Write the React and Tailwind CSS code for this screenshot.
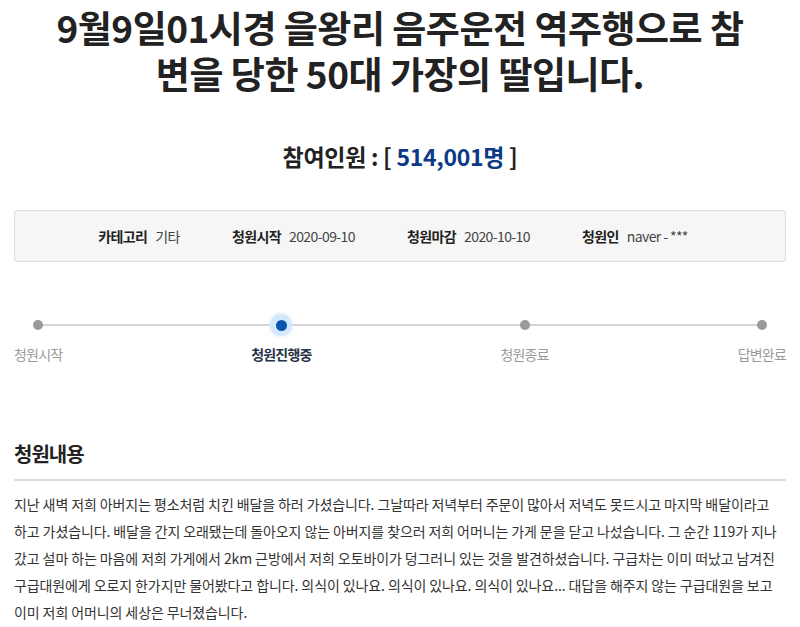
import React from 'react';

const font = { fontFamily: '"Noto Sans CJK KR", "Noto Sans", sans-serif' };

const steps = [
  { label: '청원시작', active: false },
  { label: '청원진행중', active: true },
  { label: '청원종료', active: false },
  { label: '답변완료', active: false },
];

const bodyLines = [
  '지난 새벽 저희 아버지는 평소처럼 치킨 배달을 하러 가셨습니다. 그날따라 저녁부터 주문이 많아서 저녁도 못드시고 마지막 배달이라고',
  '하고 가셨습니다. 배달을 간지 오래됐는데 돌아오지 않는 아버지를 찾으러 저희 어머니는 가게 문을 닫고 나섰습니다. 그 순간 119가 지나',
  '갔고 설마 하는 마음에 저희 가게에서 2km 근방에서 저희 오토바이가 덩그러니 있는 것을 발견하셨습니다. 구급차는 이미 떠났고 남겨진',
  '구급대원에게 오로지 한가지만 물어봤다고 합니다. 의식이 있나요. 의식이 있나요. 의식이 있나요... 대답을 해주지 않는 구급대원을 보고',
  '이미 저희 어머니의 세상은 무너졌습니다.',
];

function InfoItem({ label, value }) {
  return (
    <div className="flex items-center gap-2">
      <span className="font-bold text-[#222]">{label}</span>
      <span className="text-[#444]">{value}</span>
    </div>
  );
}

export default function App() {
  return (
    <div className="w-[800px] h-[627px] overflow-hidden bg-white px-[14px]" style={font}>
      {/* Title */}
      <h1 className="pt-[4px] text-center text-[37px] leading-[46px] font-bold tracking-[-0.5px] text-[#222]">
        9월9일01시경 을왕리 음주운전 역주행으로 참
        <br />
        변을 당한 50대 가장의 딸입니다.
      </h1>

      {/* Participants */}
      <div className="mt-[45px] text-center text-[23px] leading-[30px] font-bold tracking-[-0.3px] text-[#222]">
        참여인원 : [ <span className="text-[#0b3a86]">514,001명</span> ]
      </div>

      {/* Info box */}
      <div className="mt-[39px] h-[52px] rounded-[3px] border border-[#dcdcdc] bg-[#f6f6f6] flex items-center justify-center gap-[52px] pr-[14px] text-[14px] tracking-[-0.6px]">
        <InfoItem label="카테고리" value="기타" />
        <InfoItem label="청원시작" value="2020-09-10" />
        <InfoItem label="청원마감" value="2020-10-10" />
        <InfoItem label="청원인" value="naver - ***" />
      </div>

      {/* Progress */}
      <div className="relative mt-[53px] flex justify-between">
        <div className="absolute left-[24px] right-[24px] top-[9px] h-[2px] bg-[#d4d4d4]" />
        {steps.map((s) => (
          <div key={s.label} className="relative flex flex-col items-center">
            <div className="h-[20px] w-[20px] flex items-center justify-center">
              {s.active ? (
                <div className="h-[22px] w-[22px] shrink-0 rounded-full bg-[#d3e8fc] flex items-center justify-center shadow-[0_0_4px_#d3e8fc]">
                  <div className="h-[11px] w-[11px] rounded-full bg-[#0a55b0]" />
                </div>
              ) : (
                <div className="h-[10px] w-[10px] rounded-full bg-[#9a9a9a]" />
              )}
            </div>
            <div
              className={`mt-[9px] text-[14px] leading-[20px] tracking-[-0.8px] ${
                s.active ? 'font-bold text-[#283347]' : 'text-[#9a9a9a]'
              }`}
            >
              {s.label}
            </div>
          </div>
        ))}
      </div>

      {/* Content */}
      <h2 className="mt-[76px] text-[20px] leading-[28px] font-bold tracking-[-1px] text-[#222]">청원내용</h2>
      <div className="mt-[11px] h-[2px] bg-[#dddddd]" />
      <div className="mt-[10px] text-[14px] leading-[27px] tracking-[-0.1px] text-[#333]">
        {bodyLines.map((l, i) => (
          <div key={i} className="whitespace-nowrap">
            {l}
          </div>
        ))}
      </div>
    </div>
  );
}
